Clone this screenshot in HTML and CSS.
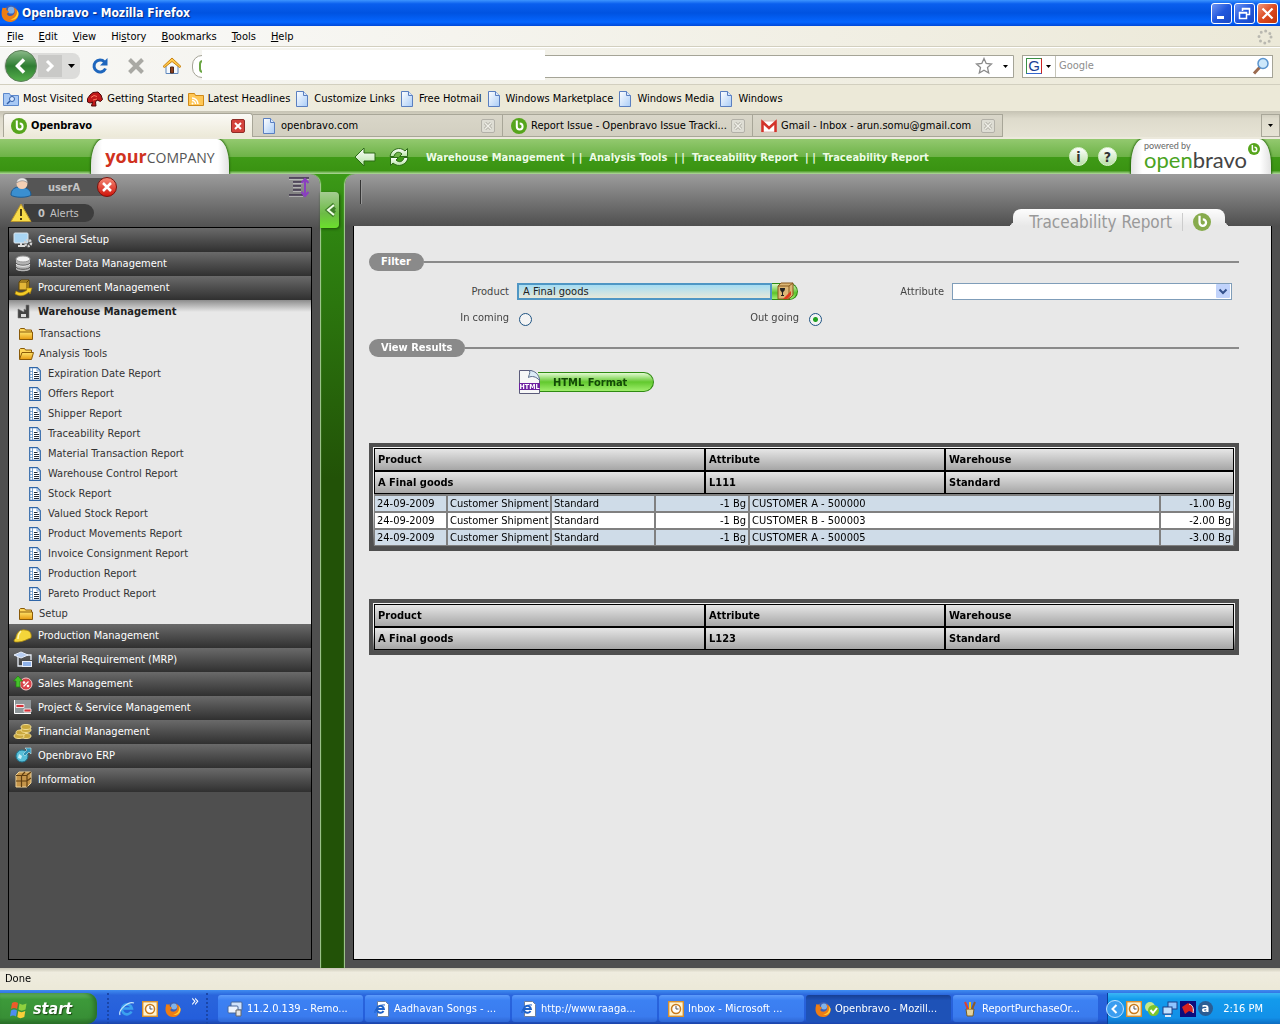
FILE: index.html
```
<!DOCTYPE html>
<html lang="en">
  <head>
    <meta charset="UTF-8">
    <title>Openbravo</title>
    <link rel="stylesheet" href="styles.css">
  </head>
  <body>
    <!-- shared icons -->
    <svg class="sprite" width="0" height="0">
      <defs>
        <linearGradient id="g-page" x1="0" y1="0" x2="1" y2="1"><stop offset="0" stop-color="#fff"/><stop offset="1" stop-color="#a9ccf7"/></linearGradient>
        <linearGradient id="g-gold" x1="0" y1="0" x2="0" y2="1"><stop offset="0" stop-color="#ffe46a"/><stop offset="1" stop-color="#e59a10"/></linearGradient>
        <linearGradient id="g-back" x1="0" y1="0" x2="0" y2="1"><stop offset="0" stop-color="#8dbb8b"/><stop offset=".5" stop-color="#2e7d32"/><stop offset="1" stop-color="#55b04b"/></linearGradient>
        <linearGradient id="g-round" x1="0" y1="0" x2="0" y2="1"><stop offset="0" stop-color="#fff"/><stop offset="1" stop-color="#b5e3a4"/></linearGradient>
        <linearGradient id="g-red" x1="0" y1="0" x2="0" y2="1"><stop offset="0" stop-color="#f58a78"/><stop offset="1" stop-color="#d01208"/></linearGradient>
      </defs>
      <symbol id="page" viewBox="0 0 16 16">
        <path d="M2.500 .5h7l4 4v11h-11z" fill="url(#g-page)" stroke="#5a7fc0"/>
        <path d="M9.500 .5v4h4" fill="#dbe9fb" stroke="#5a7fc0"/>
      </symbol>
      <symbol id="ob" viewBox="0 0 16 16">
        <circle cx="8" cy="8" r="8" fill="#56a51c"/>
        <path d="M5.800 2.500v6a2.900 2.900 0 1 0 2.900-2.900" fill="none" stroke="#fff" stroke-width="2"/>
      </symbol>
      <symbol id="fox" viewBox="0 0 16 16">
        <circle cx="8.500" cy="7.500" r="6.500" fill="#3c5fb5"/>
        <circle cx="9" cy="5.500" r="3" fill="#7fb2ea"/>
        <path d="M1.500 3c1 .8 2 .6 3.500.6C4 5 5 6 7 6.500c-.5 1.500-2 1.500-1.500 3C7 11.500 11 11 12 8c.8-2-.2-4-1-5 3 1 5 4 4.500 7-.8 4-4 6-7.500 6C3.500 16 .5 12.500.5 8.500.5 6 1 4.500 1.500 3z" fill="#ef7d13"/>
        <path d="M14 5c1 4-1 8-6 8.500 4 1.500 8-1.500 7.500-6z" fill="#ffd33a"/>
      </symbol>
      <symbol id="folder" viewBox="0 0 16 14">
        <path d="M1.500 11.500v-9l1-1h4l1 1.500h6v2" fill="#ffd75a" stroke="#8a5a08"/>
        <path d="M1.500 12.500v-7.500h13v7.500z" fill="url(#g-gold)" stroke="#8a5a08"/>
      </symbol>
      <symbol id="folder-open" viewBox="0 0 16 14">
        <path d="M1.500 12V2.500l1-1h4l1 1.500h6v2" fill="#ffd75a" stroke="#8a5a08"/>
        <path d="M1.500 12.500L4 5.500h11.500l-2 7z" fill="url(#g-gold)" stroke="#8a5a08"/>
      </symbol>
      <symbol id="report" viewBox="0 0 12 14">
        <path d="M.7 .7h7.600l3 3v9.600H.7z" fill="#fff" stroke="#2f66a8" stroke-width="1.200"/>
        <path d="M8 1v3h3M.7 4.500h3M.7 7.500h3M.7 10.500h3M3.500 1v12" fill="none" stroke="#5c8fc7" stroke-width=".8"/>
        <path d="M5 5.500h3.500M5 7.500h5M5 9.500h5M5 11.500h5" stroke="#1f2c3c"/>
      </symbol>
      <symbol id="tabx" viewBox="0 0 14 14">
        <rect x=".5" y=".5" width="13" height="13" rx="1.500" fill="#deddd4" stroke="#b3b1a8"/>
        <path d="M4 4l6 6M10 4l-6 6" stroke="#aaa89f" stroke-width="3"/>
        <path d="M4 4l6 6M10 4l-6 6" stroke="#f0efe8" stroke-width="1.500"/>
      </symbol>
      <symbol id="ie" viewBox="0 0 16 16">
        <path d="M12.500 10.500a5 5 0 1 1 .4-3H4" fill="none" stroke="#3ba1ee" stroke-width="2.600"/>
        <path d="M1 14C-1 9 9 0 15 2" fill="none" stroke="#c5e5fa" stroke-width="1.200"/>
      </symbol>
      <symbol id="iepage" viewBox="0 0 16 16">
        <path d="M3.500 .5h8l3 3v12h-11z" fill="#fff" stroke="#6b7f9f"/>
        <path d="M9.500 10a3.500 3.500 0 1 1 .4-2H4" fill="none" stroke="#1f62c9" stroke-width="2"/>
        <path d="M1 12C0 8 6 3 11 4" fill="none" stroke="#1f62c9"/>
      </symbol>
      <symbol id="clock" viewBox="0 0 16 16">
        <rect x=".7" y=".7" width="14.600" height="14.600" fill="#fff3cf" stroke="#d7902e" stroke-width="1.400"/>
        <circle cx="8" cy="8" r="4.500" fill="#fff" stroke="#c97b1c" stroke-width="1.500"/>
        <path d="M8 5v3h2.500" fill="none" stroke="#555"/>
      </symbol>
    </svg>

    <header class="titlebar">
      <svg width="18" height="18"><use href="#fox"/></svg>
      <h1>Openbravo - Mozilla Firefox</h1>
      <div class="window-buttons">
        <button aria-label="Minimize"><svg width="19" height="19"><path d="M5 13.500h7" stroke="#fff" stroke-width="3"/></svg></button>
        <button aria-label="Restore"><svg width="19" height="19"><path d="M7.500 7V4.500h7v6H12M4.500 8.500h7v6h-7zM7 5h8M4 9h8" fill="none" stroke="#fff" stroke-width="1.500"/></svg></button>
        <button class="close" aria-label="Close"><svg width="19" height="19"><path d="M4.500 4.500l10 10M14.500 4.500l-10 10" stroke="#fff" stroke-width="2.200"/></svg></button>
      </div>
    </header>

    <nav class="menubar">
      <a href="#"><u>F</u>ile</a>
      <a href="#"><u>E</u>dit</a>
      <a href="#"><u>V</u>iew</a>
      <a href="#">Hi<u>s</u>tory</a>
      <a href="#"><u>B</u>ookmarks</a>
      <a href="#"><u>T</u>ools</a>
      <a href="#"><u>H</u>elp</a>
      <svg class="throbber" width="16" height="16"><circle cx="8" cy="8" r="6" fill="none" stroke="#b9b8b0" stroke-width="3" stroke-linecap="round" stroke-dasharray="0 4.710"/></svg>
    </nav>

    <div class="navbar">
      <div class="history">
        <button class="back" aria-label="Back"><svg width="34" height="34"><circle cx="17" cy="17" r="15.500" fill="url(#g-back)" stroke="#5d7f5a"/><path d="M20 10.500L13.500 17l6.500 6.500" fill="none" stroke="#fff" stroke-width="3.500"/></svg></button>
        <button class="forward" aria-label="Forward"><svg width="24" height="22"><path d="M9 6l5 5-5 5" fill="none" stroke="#fff" stroke-width="3"/></svg></button>
        <button class="recent" aria-label="Recent pages"><svg width="7" height="4"><path d="M0 0h7L3.500 4z"/></svg></button>
      </div>
      <button class="tool" aria-label="Reload"><svg width="18" height="18"><path d="M14.500 11.500A6 6 0 1 1 13.500 5" fill="none" stroke="#1e66bd" stroke-width="3"/><path d="M16.500 1v7.500H9z" fill="#1e66bd"/></svg></button>
      <button class="tool" aria-label="Stop"><svg width="18" height="18"><path d="M2.500 2.500l13 13M15.500 2.500l-13 13" stroke="#a9a9a4" stroke-width="4"/></svg></button>
      <button class="tool" aria-label="Home"><svg width="20" height="18"><path d="M4 9v7.500h12V9l-6-6z" fill="#f4f8fd" stroke="#5d87bd"/><path d="M1 9.500L10 1l9 8.500-1.500 1L10 4.500l-7.500 6z" fill="#ffc94a" stroke="#c98212"/><path d="M8.500 10h3v6h-3z" fill="#8c3d1c" stroke="#4d2a1a"/></svg></button>
      <div class="urlbar">
        <input type="text" aria-label="Location">
        <span class="site"></span>
        <span class="blank"></span>
        <svg width="18" height="18"><path d="M9 1.500l2.200 5 5.300.5-4 3.600 1.200 5.400L9 13.200 4.300 16l1.200-5.400-4-3.600 5.300-.5z" fill="#fff" stroke="#8b8b8b" stroke-width="1.300"/></svg>
        <svg class="drop" width="5" height="3"><path d="M0 0h5L2.500 3z"/></svg>
      </div>
      <div class="search">
        <span class="engine">G</span>
        <svg class="drop" width="5" height="3"><path d="M0 0h5L2.500 3z"/></svg>
        <input type="text" placeholder="Google" aria-label="Search">
        <svg width="18" height="18"><path d="M8 10l-6 6.500" stroke="#9b6a4f" stroke-width="3"/><circle cx="11" cy="6.500" r="5" fill="#cde8fb" stroke="#5a94cf" stroke-width="1.500"/></svg>
      </div>
    </div>

    <nav class="bookmarks">
      <a href="#"><svg width="16" height="16"><path d="M.5 2.500h6l1 2h8v10H.5z" fill="#a8c9f5" stroke="#5b87cb"/><circle cx="9" cy="8" r="2.500" fill="#dcebff" stroke="#315ea8"/><path d="M7 10l-3 3" stroke="#315ea8" stroke-width="1.500"/></svg>Most Visited</a>
      <a href="#"><svg width="16" height="16"><path d="M.5 7.500L3 4l3-2.500 5-.5 3 3 1.500 4.500-2 2-3.500-1.500-1.500 2 .5 4H4.500l1-4-2.500 1-2.500-1z" fill="#c01a1a" stroke="#4d0808"/><path d="M4 6.500l3-2 3 1M6 9l4-1" fill="none" stroke="#ff7a5d"/></svg>Getting Started</a>
      <a href="#"><svg width="16" height="16"><path d="M.5 2.500h6l1 2h8v10H.5z" fill="#ffc755" stroke="#cf8a18"/><path d="M4 7a6 6 0 0 1 6 6M4 9.500A3.500 3.500 0 0 1 7.500 13" fill="none" stroke="#fff" stroke-width="1.500"/><circle cx="4.500" cy="12.500" r="1" fill="#fff"/></svg>Latest Headlines</a>
      <a href="#"><svg width="16" height="16"><use href="#page"/></svg>Customize Links</a>
      <a href="#"><svg width="16" height="16"><use href="#page"/></svg>Free Hotmail</a>
      <a href="#"><svg width="16" height="16"><use href="#page"/></svg>Windows Marketplace</a>
      <a href="#"><svg width="16" height="16"><use href="#page"/></svg>Windows Media</a>
      <a href="#"><svg width="16" height="16"><use href="#page"/></svg>Windows</a>
    </nav>

    <div class="tabs">
      <div class="tab active">
        <svg width="16" height="16"><use href="#ob"/></svg>
        <a href="#">Openbravo</a>
        <button aria-label="Close tab"><svg width="14" height="14"><rect x=".5" y=".5" width="13" height="13" rx="1.500" fill="#d4423b" stroke="#8f2d28"/><path d="M4 4l6 6M10 4l-6 6" stroke="#fff" stroke-width="2"/></svg></button>
      </div>
      <div class="tab">
        <svg width="16" height="16"><use href="#page"/></svg>
        <a href="#">openbravo.com</a>
        <button aria-label="Close tab"><svg width="14" height="14"><use href="#tabx"/></svg></button>
      </div>
      <div class="tab">
        <svg width="16" height="16"><use href="#ob"/></svg>
        <a href="#">Report Issue - Openbravo Issue Tracki...</a>
        <button aria-label="Close tab"><svg width="14" height="14"><use href="#tabx"/></svg></button>
      </div>
      <div class="tab">
        <svg width="16" height="16"><path d="M.5 3h15v11H.5z" fill="#fff" stroke="#e0b5b0"/><path d="M1.500 14V4L8 10l6.500-6v10" fill="none" stroke="#d3332a" stroke-width="2.500"/></svg>
        <a href="#">Gmail - Inbox - arun.somu@gmail.com</a>
        <button aria-label="Close tab"><svg width="14" height="14"><use href="#tabx"/></svg></button>
      </div>
      <button class="all-tabs" aria-label="List all tabs"><svg width="5" height="3"><path d="M0 0h5L2.500 3z"/></svg></button>
    </div>

    <div class="app">
      <header class="topbar">
        <div class="company"><b>your</b>COMPANY</div>
        <button class="go-back" aria-label="Go back"><svg width="22" height="22"><path d="M1 11l9-9v5h11v8H10v5z" fill="url(#g-round)" stroke="#2c6b17"/></svg></button>
        <button class="refresh" aria-label="Refresh"><svg width="20" height="20"><path d="M1 9.500C2 2 11-1 16 4l2.500-2.500v8h-8L13 7c-3-3-7-2-8 2.500z" fill="url(#g-round)" stroke="#2c6b17"/><path d="M19 10.500c-1 7.500-10 10.500-15 5.500l-2.500 2.500v-8h8L7 13c3 3 7 2 8-2.500z" fill="url(#g-round)" stroke="#2c6b17"/></svg></button>
        <nav class="breadcrumb">
          <a href="#">Warehouse Management</a><span>| |</span><a href="#">Analysis Tools</a><span>| |</span><a href="#">Traceability Report</a><span class="wide">| |</span><a href="#">Traceability Report</a>
        </nav>
        <button class="round" aria-label="About">i</button>
        <button class="round" aria-label="Help">?</button>
        <div class="powered">
          <small>powered by</small>
          <strong><em>open</em>bravo</strong>
          <svg width="12" height="12" viewBox="0 0 16 16"><use href="#ob"/></svg>
        </div>
      </header>

      <aside class="sidebar">
        <div class="session">
          <div class="user">
            <svg width="22" height="21"><path d="M1 18c0-6 4-8 9-8s11 2 11 8c-3 3-17 3-20 0z" fill="#3a8fd0" stroke="#1d5c93"/><circle cx="12" cy="6.500" r="5.500" fill="#f3cfb4"/><path d="M6.500 6c0-7 11-7 11 0-3-3-7-3-11 0z" fill="#e9e9e9" stroke="#777" stroke-width=".6"/></svg>
            <a href="#">userA</a>
            <button aria-label="Log out"><svg width="22" height="22"><circle cx="11" cy="11" r="9.500" fill="url(#g-red)" stroke="#7a120c"/><path d="M7 7l8 8M15 7l-8 8" stroke="#fff" stroke-width="2.500"/></svg></button>
          </div>
          <button class="expand" aria-label="Expand menu"><svg width="22" height="22"><path d="M1 3h20M5 7h10M5 11h8M5 15h8M1 20h14" stroke="#ddd" stroke-width="1"/><path d="M1 2h20M5 6h9M5 10h8M5 14h8M1 19h14" stroke="#3b3048" stroke-width="1.500"/><path d="M17 3v16M13.500 7L17 3l3.500 4M13.500 16l3.500 4 3.500-4" fill="none" stroke="#8a3fc0" stroke-width="2"/></svg></button>
          <div class="alerts">
            <svg width="22" height="20"><path d="M11 1l10 17.500H1z" fill="#f8dc4a" stroke="#b9952c" stroke-linejoin="round"/><path d="M11 6v7M11 15v2" stroke="#4a3b10" stroke-width="2"/></svg>
            <a href="#"><b>0</b> Alerts</a>
          </div>
        </div>
        <ul class="menu">
          <li><a class="group" href="#"><svg width="20" height="18"><rect x="1" y="2" width="14" height="10" rx="1" fill="#a9d5f3" stroke="#dce6ee"/><path d="M5 15h7M8 12v3" stroke="#ddd" stroke-width="2"/><circle cx="15" cy="12" r="3" fill="none" stroke="#d5d5d5" stroke-width="2.500" stroke-dasharray="2 1"/></svg>General Setup</a></li>
          <li><a class="group" href="#"><svg width="20" height="18"><path d="M3 4v10c0 3 14 3 14 0V4z" fill="#b5b5b5"/><ellipse cx="10" cy="4" rx="7" ry="3" fill="#f2f2f2" stroke="#999"/><path d="M3 8c1 3 13 3 14 0M3 12c1 3 13 3 14 0" fill="none" stroke="#555"/><path d="M3 9c1 3 13 3 14 0" fill="none" stroke="#eee"/></svg>Master Data Management</a></li>
          <li><a class="group" href="#"><svg width="20" height="18"><path d="M6 3l2-2h8v8l-2 2H6z" fill="#e2b637" stroke="#604507"/><path d="M6 3h8v8M14 3l2-2" fill="none" stroke="#604507"/><path d="M3 12c5 3 8 1 11-1l-1-2h6l-2 6-1-2c-4 4-9 5-14 2z" fill="#f3cc27" stroke="#a67c07" stroke-width=".6"/></svg>Procurement Management</a></li>
          <li class="open">
            <a class="group" href="#"><svg width="20" height="18"><path d="M5 15V6l6 3V6l2 1V2h3v13z" fill="#444" stroke="#777" stroke-width=".6"/><path d="M8 11h5v3H8z" fill="#ddd"/></svg>Warehouse Management</a>
            <ul>
              <li><a class="folder" href="#"><svg width="16" height="14"><use href="#folder"/></svg>Transactions</a></li>
              <li><a class="folder" href="#"><svg width="16" height="14"><use href="#folder-open"/></svg>Analysis Tools</a>
                <ul>
                  <li><a class="report" href="#"><svg width="12" height="14"><use href="#report"/></svg>Expiration Date Report</a></li>
                  <li><a class="report" href="#"><svg width="12" height="14"><use href="#report"/></svg>Offers Report</a></li>
                  <li><a class="report" href="#"><svg width="12" height="14"><use href="#report"/></svg>Shipper Report</a></li>
                  <li><a class="report" href="#"><svg width="12" height="14"><use href="#report"/></svg>Traceability Report</a></li>
                  <li><a class="report" href="#"><svg width="12" height="14"><use href="#report"/></svg>Material Transaction Report</a></li>
                  <li><a class="report" href="#"><svg width="12" height="14"><use href="#report"/></svg>Warehouse Control Report</a></li>
                  <li><a class="report" href="#"><svg width="12" height="14"><use href="#report"/></svg>Stock Report</a></li>
                  <li><a class="report" href="#"><svg width="12" height="14"><use href="#report"/></svg>Valued Stock Report</a></li>
                  <li><a class="report" href="#"><svg width="12" height="14"><use href="#report"/></svg>Product Movements Report</a></li>
                  <li><a class="report" href="#"><svg width="12" height="14"><use href="#report"/></svg>Invoice Consignment Report</a></li>
                  <li><a class="report" href="#"><svg width="12" height="14"><use href="#report"/></svg>Production Report</a></li>
                  <li><a class="report" href="#"><svg width="12" height="14"><use href="#report"/></svg>Pareto Product Report</a></li>
                </ul>
              </li>
              <li><a class="folder" href="#"><svg width="16" height="14"><use href="#folder"/></svg>Setup</a></li>
            </ul>
          </li>
          <li><a class="group" href="#"><svg width="20" height="18"><path d="M1 14c0-2 2-2 2-4C4 5 8 2 12 3c5 0 7 4 6 8-4 1-8 4-13 4-2 0-4 0-4-1z" fill="#f4d53a" stroke="#a9860f" stroke-width=".8"/><path d="M8 4c-2 2-3 4-3 8" fill="none" stroke="#fff7b0" stroke-width="1.500"/></svg>Production Management</a></li>
          <li><a class="group" href="#"><svg width="20" height="18"><path d="M8 1l7 3-7 3-7-3z" fill="#b7cdf0" stroke="#e8eef8"/><path d="M5 6v9h4M14 4h4v5" fill="none" stroke="#e8eef8" stroke-width="1.300"/><rect x="9.500" y="10.500" width="9" height="5" fill="#8fb2ea" stroke="#e8eef8"/></svg>Material Requirement (MRP)</a></li>
          <li><a class="group" href="#"><svg width="20" height="18"><circle cx="13" cy="9" r="6" fill="#d9434a" stroke="#f7c9c9"/><path d="M10.500 11.500l5-5" stroke="#fff" stroke-width="1.300"/><circle cx="11" cy="7.500" r="1.300" fill="#fff"/><circle cx="15" cy="11" r="1.300" fill="#fff"/><path d="M5 1l4.500 5H7v6H3V6H.5z" fill="#45c22b" stroke="#1f7d10" stroke-width=".7"/></svg>Sales Management</a></li>
          <li><a class="group" href="#"><svg width="20" height="18"><path d="M1 1h17v14H1z" fill="#8f9699"/><path d="M1.500 1v13.500H18" fill="none" stroke="#fff"/><path d="M3 5.500h8v3H3zM11 10h7v3h-7z" fill="#d6333a" stroke="#fff" stroke-width=".8"/></svg>Project &amp; Service Management</a></li>
          <li><a class="group" href="#"><svg width="20" height="18" fill="#c9a83e" stroke="#f1dc8f"><ellipse cx="13" cy="13" rx="5" ry="2.500"/><ellipse cx="6" cy="13" rx="5" ry="2.500"/><ellipse cx="8" cy="9.500" rx="5" ry="2.500"/><ellipse cx="13" cy="7" rx="5" ry="2.500"/><ellipse cx="13" cy="4" rx="5" ry="2.500"/></svg>Financial Management</a></li>
          <li><a class="group" href="#"><svg width="20" height="18"><circle cx="9" cy="9" r="6" fill="#58bfd8" stroke="#1f7590"/><path d="M6 7l3 2-1 3-3-1z" fill="#c9f0f8"/><path d="M10 7l4-4-2-2h6v6l-2-2-4 4z" fill="#2f92b5" stroke="#c4e9f2" stroke-width=".6"/></svg>Openbravo ERP</a></li>
          <li><a class="group" href="#"><svg width="20" height="18"><path d="M3 4l3-3h12v11l-4 4H3z" fill="#c5954a" stroke="#eed39a"/><path d="M3 4.500h11V16M14 4l4-3M8.500 4v12M3 10h11l4-3M9 4l3-3" fill="none" stroke="#5f3e12" stroke-width="1.200"/></svg>Information</a></li>
        </ul>
      </aside>

      <div class="divider">
        <button aria-label="Hide menu"><svg width="12" height="16"><path d="M10 2L3 8l7 6M11 5.500L8 8l3 2.500" fill="none" stroke="#3f7d2a" stroke-width="3"/><path d="M10 3L4 8l6 5" fill="none" stroke="#f2ffe9" stroke-width="2"/></svg></button>
      </div>

      <main class="workspace">
        <div class="toolbar">
          <span class="separator"></span>
          <h2>Traceability Report <svg width="18" height="18" viewBox="0 0 16 16"><circle cx="8" cy="8" r="8" fill="#87ab4d"/><path d="M5.800 2.500v6a2.900 2.900 0 1 0 2.900-2.900" fill="none" stroke="#fff" stroke-width="2"/></svg></h2>
        </div>
        <form class="content">
          <h3><span>Filter</span></h3>
          <div class="fields">
            <label for="product">Product</label>
            <div class="lookup">
              <input id="product" type="text" value="A Final goods" autofocus>
              <button type="button" aria-label="Select product"><svg width="18" height="19"><path d="M2 4l3-3h12v12l-4 4H2z" fill="#dcb776" stroke="#87591c"/><path d="M2 4h11v13M13 4l4-3" fill="none" stroke="#87591c"/><path d="M4 6h5c0 4-2 3-2 5v2h1v1H5v-1h1v-2c0-2-2-1-2-5z" fill="#222"/><path d="M7 17l8-8v4l-4 4z" fill="#df3b1f"/></svg></button>
            </div>
            <label for="attribute">Attribute</label>
            <div class="combo">
              <select id="attribute"><option></option></select>
              <svg width="14" height="14"><rect width="14" height="14" rx="1" fill="#c1d3fb"/><path d="M3.500 5.500L7 9l3.500-3.500" fill="none" stroke="#33518c" stroke-width="2"/></svg>
            </div>
            <label for="incoming">In coming</label>
            <div class="direction">
              <input id="incoming" type="radio" name="direction">
              <label for="outgoing">Out going</label>
            </div>
            <div class="direction"><input id="outgoing" type="radio" name="direction" checked></div>
          </div>
          <h3><span>View Results</span></h3>
          <div class="actions">
            <button type="button">
              <svg width="21" height="24"><path d="M.5 .5h12l8 8v15H.5z" fill="#f7f7f7" stroke="#5b5b7a"/><path d="M10.500 .5c1 3-1 5-1 7 3-2 8-1 11 3 0-6-5-10-10-10z" fill="#dcebf6" stroke="#5b6b8a"/><path d="M0 13h21v7H0z" fill="#6c1fa0"/><text x="10.500" y="19" text-anchor="middle">HTML</text></svg>
              <span>HTML Format</span>
            </button>
          </div>

          <div class="results">
            <table>
              <colgroup><col class="c-date"><col class="c-type"><col class="c-type"><col class="c-a"><col class="c-b"><col class="c-c"><col><col class="c-total"></colgroup>
              <thead>
                <tr><th colspan="4">Product</th><th colspan="2">Attribute</th><th colspan="2">Warehouse</th></tr>
                <tr><th colspan="4">A Final goods</th><th colspan="2">L111</th><th colspan="2">Standard</th></tr>
              </thead>
              <tbody>
                <tr><td>24-09-2009</td><td>Customer Shipment</td><td>Standard</td><td class="num" colspan="2">-1 Bg</td><td colspan="2">CUSTOMER A - 500000</td><td class="num">-1.00 Bg</td></tr>
                <tr><td>24-09-2009</td><td>Customer Shipment</td><td>Standard</td><td class="num" colspan="2">-1 Bg</td><td colspan="2">CUSTOMER B - 500003</td><td class="num">-2.00 Bg</td></tr>
                <tr><td>24-09-2009</td><td>Customer Shipment</td><td>Standard</td><td class="num" colspan="2">-1 Bg</td><td colspan="2">CUSTOMER A - 500005</td><td class="num">-3.00 Bg</td></tr>
              </tbody>
            </table>
          </div>
          <div class="results">
            <table>
              <colgroup><col class="c-date"><col class="c-type"><col class="c-type"><col class="c-a"><col class="c-b"><col class="c-c"><col><col class="c-total"></colgroup>
              <thead>
                <tr><th colspan="4">Product</th><th colspan="2">Attribute</th><th colspan="2">Warehouse</th></tr>
                <tr><th colspan="4">A Final goods</th><th colspan="2">L123</th><th colspan="2">Standard</th></tr>
              </thead>
            </table>
          </div>
        </form>
      </main>
    </div>

    <div class="statusbar">Done</div>

    <footer class="taskbar">
      <button class="start"><svg width="20" height="20"><path d="M3 4c2-1.500 4-1.500 6 0L8 10C6 8.500 4 8.500 2 10z" fill="#ee5b2b"/><path d="M10.500 4.500c2 1.500 4 1.500 7 0l-1 6c-3 1.500-5 1.500-7 0z" fill="#8fd13f"/><path d="M2 11.500c2-1.500 4-1.500 6 0l-1 6c-2-1.500-4-1.500-6 0z" fill="#4d8df0"/><path d="M9.300 12c2 1.500 4 1.500 7 0l-1 6c-3 1.500-5 1.500-7 0z" fill="#f8cf3a"/></svg>start</button>
      <div class="quick">
        <button aria-label="Internet Explorer"><svg width="16" height="16"><use href="#ie"/></svg></button>
        <button aria-label="Outlook"><svg width="16" height="16"><use href="#clock"/></svg></button>
        <button aria-label="Firefox"><svg width="16" height="16"><use href="#fox"/></svg></button>
        <button class="more" aria-label="More">»</button>
      </div>
      <div class="tasks">
        <button><svg width="16" height="16"><rect x="4" y="1" width="11" height="8" rx="1" fill="#cfe2fb" stroke="#47679a"/><rect x="1" y="5" width="10" height="7" rx="1" fill="#eef5ff" stroke="#47679a"/><path d="M9 9h5v6H9z" fill="#e3e3e3" stroke="#666"/></svg><span>11.2.0.139 - Remo...</span></button>
        <button><svg width="16" height="16"><use href="#iepage"/></svg><span>Aadhavan Songs - ...</span></button>
        <button><svg width="16" height="16"><use href="#iepage"/></svg><span>http://www.raaga...</span></button>
        <button><svg width="16" height="16"><use href="#clock"/></svg><span>Inbox - Microsoft ...</span></button>
        <button class="current"><svg width="16" height="16"><use href="#fox"/></svg><span>Openbravo - Mozill...</span></button>
        <button><svg width="16" height="16"><path d="M4 8h8l-1 7H5z" fill="#e3d3a0" stroke="#775e22"/><path d="M6 8L3 1" stroke="#e0402b" stroke-width="2"/><path d="M8 8V1" stroke="#f0c419" stroke-width="2"/><path d="M10 8l3-7" stroke="#8c5a2a" stroke-width="2"/></svg><span>ReportPurchaseOr...</span></button>
      </div>
      <div class="tray">
        <button aria-label="Show hidden icons"><svg width="18" height="18"><circle cx="9" cy="9" r="8.500" fill="#3a9df0" stroke="#bfe2ff"/><path d="M10.500 5L6.500 9l4 4" fill="none" stroke="#fff" stroke-width="2"/></svg></button>
        <svg width="16" height="16"><use href="#clock"/></svg>
        <svg width="16" height="16"><circle cx="6" cy="6" r="5" fill="#c5e88a"/><circle cx="9.500" cy="9.500" r="5.500" fill="#7cc52c"/><path d="M6.500 9l2.500 3 4-5" fill="none" stroke="#fff" stroke-width="2"/></svg>
        <svg width="16" height="16"><rect x="6" y="1" width="9" height="7" fill="#8fc4ff" stroke="#1f3f86"/><rect x="1" y="6" width="9" height="7" fill="#bfe0ff" stroke="#1f3f86"/><path d="M3 15h6" stroke="#dde8f7" stroke-width="2"/></svg>
        <svg width="16" height="16"><rect width="16" height="16" fill="#0c0c7c"/><path d="M2 6l6-4 4 3 2 7-5-2-4 3z" fill="#d8221f"/><path d="M9 3c4 1 5 5 4 9" fill="none" stroke="#fff"/></svg>
        <span class="avast">a</span>
        <time>2:16 PM</time>
      </div>
    </footer>
  </body>
</html>
```
FILE: styles.css
```
* {
  box-sizing: border-box;
}

body {
  margin: 0;
  min-height: 100vh;
  display: flex;
  flex-direction: column;
  font-family: "DejaVu Sans Condensed", Tahoma, sans-serif;
  font-size: 11px;
  line-height: 16px;
  color: #000;
  background: #ece9d8;
}

a {
  color: inherit;
  text-decoration: none;
}

button,
input,
select {
  font: inherit;
  color: inherit;
}

button {
  display: flex;
  align-items: center;
  justify-content: center;
  padding: 0;
  border: 0;
  background: none;
}

svg {
  flex: none;
}

ul {
  margin: 0;
  padding: 0;
  list-style: none;
}

.sprite {
  position: absolute;
}

/* browser window */

.titlebar {
  display: flex;
  align-items: center;
  gap: 3px;
  height: 26px;
  padding: 0 2px 0 1px;
  color: #fff;
  background: linear-gradient(#3d95ff 0, #0a5fee 15%, #0053e1 50%, #0566ff 85%, #0048d8);
}

.titlebar h1 {
  flex: 1;
  margin: 0;
  font-size: 12px;
  text-shadow: 1px 1px 1px #0a2a80;
}

.window-buttons {
  display: flex;
  gap: 2px;
}

.window-buttons button {
  width: 21px;
  height: 21px;
  border: 1px solid #fff;
  border-radius: 3px;
  background: linear-gradient(135deg, #6f95f3, #2157dd 50%, #1a49c4);
}

.window-buttons .close {
  background: linear-gradient(135deg, #f0977c, #dc4a20 50%, #c03408);
}

.menubar {
  display: flex;
  align-items: center;
  gap: 15px;
  height: 21px;
  padding: 1px 7px 0;
  background: linear-gradient(90deg, #fafafa, #ece9d8);
  border-bottom: 1px solid #d2cfbf;
}

.throbber {
  margin-left: auto;
}

.navbar {
  display: flex;
  align-items: center;
  height: 38px;
  padding: 0 7px 0 4px;
  background: linear-gradient(90deg, #f7f7f5, #ece9d8);
  border-top: 1px solid #fff;
  border-bottom: 1px solid #d2cfbf;
}

.history {
  display: flex;
  align-items: center;
  width: 76px;
  height: 26px;
  margin-right: 10px;
  border-radius: 14px 8px 8px 14px;
  background: #dcdcda;
}

.history .forward {
  width: 24px;
  height: 22px;
  background: #c9c9c7;
}

.history .recent {
  flex: 1;
}

.tool {
  width: 36px;
}

.tool:nth-of-type(1) {
  width: 20px;
  margin-right: 8px;
}

.urlbar {
  position: relative;
  display: flex;
  align-items: center;
  flex: 1;
  gap: 10px;
  height: 23px;
  margin: 0 8px 0 2px;
  padding-right: 5px;
  border: 1px solid #a5a497;
  border-radius: 10px 0 0 10px;
  background: #fff;
}

.urlbar input,
.search input {
  flex: 1;
  min-width: 0;
  border: 0;
  padding: 0;
  outline: 0;
  background: none;
}

.site {
  position: absolute;
  left: 6px;
  width: 8px;
  height: 13px;
  border: 2px solid #6aa544;
  border-radius: 8px;
}

.blank {
  position: absolute;
  left: 9px;
  top: -6px;
  width: 343px;
  height: 30px;
  background: #fff;
}

.search {
  display: flex;
  align-items: center;
  gap: 4px;
  width: 251px;
  height: 23px;
  padding: 0 2px 0 3px;
  border: 1px solid #a5a497;
  background: #fff;
}

.engine {
  width: 16px;
  height: 16px;
  border: 1px solid #3a8f45;
  border-right-color: #c22;
  border-bottom-color: #36c;
  font-family: "Liberation Sans", sans-serif;
  font-size: 15px;
  line-height: 14px;
  text-align: center;
  color: #1c3f94;
}

.search input {
  padding-left: 3px;
  align-self: stretch;
  border-left: 1px solid #c5c4b8;
}

.search input::placeholder {
  color: #8d8d8d;
}

.bookmarks {
  display: flex;
  align-items: center;
  gap: 4px;
  height: 26px;
  padding: 1px 3px 0;
  background: linear-gradient(90deg, #f6f5f0, #ece9d8 30%);
}

.bookmarks a {
  display: flex;
  align-items: center;
  gap: 4px;
  white-space: nowrap;
}

.tabs {
  display: flex;
  align-items: flex-end;
  height: 28px;
  padding-left: 3px;
  background: linear-gradient(#c6c3b4, #dedbcc 30%, #e6e3d5);
  border-bottom: 2px solid #ece9dc;
}

.tab {
  display: flex;
  align-items: center;
  gap: 4px;
  flex: 0 1 250px;
  min-width: 0;
  height: 23px;
  padding: 0 7px 0 8px;
  border: 1px solid #a8a698;
  border-width: 1px 1px 1px 0;
  background: linear-gradient(#d9d6c9, #d2cfc0);
}

.tab a {
  flex: 1;
  overflow: hidden;
  white-space: nowrap;
}

.tab.active {
  height: 24px;
  padding-left: 7px;
  border-width: 1px 1px 0;
  border-radius: 3px 3px 0 0;
  font-weight: bold;
  background: linear-gradient(#fbfaf6, #ece9d8);
}

.all-tabs {
  width: 19px;
  height: 23px;
  margin-left: auto;
  border: 1px solid #a8a698;
}

/* application */

.app {
  flex: 1;
  display: grid;
  grid-template-columns: 320px 25px 1fr;
  grid-template-rows: 35px 1fr;
  background: linear-gradient(#3c9a17 35px, #2f8511 90px, #225207 340px);
}

.topbar {
  grid-column: 1 / -1;
  display: flex;
  align-items: center;
  padding: 0 9px 0 91px;
  background: linear-gradient(#93c96f, #6eb348 50%, #3f9a17 51%, #3a9312 90%, #b5dba0);
}

.company {
  align-self: stretch;
  width: 138px;
  margin-right: 125px;
  border-radius: 12px 12px 0 0 / 26px 26px 0 0;
  box-shadow: 0 0 2px 1px #2b6b12;
  clip-path: inset(0 -3px);
  font-family: "Open Sans", sans-serif;
  font-size: 14px;
  line-height: 35px;
  text-align: center;
  color: #555;
  background: linear-gradient(90deg, #e2e2e2, #fff 8%, #fff 92%, #e2e2e2);
}

.company b {
  font-size: 18px;
  color: #d0321e;
}

.refresh {
  margin: 0 17px 0 13px;
}

.breadcrumb {
  display: flex;
  flex: 1;
  gap: 7px;
  padding-top: 2px;
  font-weight: bold;
  white-space: nowrap;
  color: #eefbe6;
}

.round {
  width: 19px;
  height: 19px;
  margin-right: 10px;
  border: 1px solid #dff3d3;
  border-radius: 50%;
  font-size: 14px;
  font-weight: bold;
  color: #333;
  background: linear-gradient(#fff, #b9dfa8);
}

.powered {
  position: relative;
  align-self: stretch;
  width: 140px;
  margin-left: 4px;
  padding: 2px 0 0 13px;
  border-radius: 12px 12px 0 0 / 26px 26px 0 0;
  box-shadow: 0 0 2px 1px #2b6b12;
  clip-path: inset(0 -3px);
  background: linear-gradient(90deg, #e2e2e2, #fff 8%, #fff 92%, #e2e2e2);
}

.powered small,
.powered strong {
  display: block;
  font-family: Lato, sans-serif;
  font-size: 9px;
  line-height: 10px;
  color: #666;
}

.powered strong {
  font-size: 22px;
  font-weight: normal;
  line-height: 18px;
  color: #444;
}

.powered em {
  font-style: normal;
  color: #4aa31e;
}

.powered svg {
  position: absolute;
  top: 4px;
  right: 11px;
}

.sidebar {
  display: flex;
  flex-direction: column;
  padding: 0 8px 8px;
  border-radius: 0 10px 0 0;
  background: linear-gradient(#9c9c9c, #4f4f4f 55px);
  box-shadow: 1px 0 1px #a9cf98;
}

.session {
  display: grid;
  grid-template-columns: 1fr 22px;
  grid-auto-rows: 26px;
  height: 53px;
  padding: 0 2px;
  font-weight: bold;
  color: #c4c4c4;
}

.user,
.alerts {
  display: flex;
  align-items: center;
}

/* icons sit on top of the dark pills */
.user svg,
.alerts svg {
  position: relative;
  z-index: 1;
}

.user a,
.alerts a {
  width: 80px;
  height: 18px;
  margin-left: -8px;
  line-height: 19px;
  text-align: center;
  background: #555;
}

.user button {
  margin-left: -8px;
}

.alerts a {
  width: 70px;
  padding-left: 14px;
  border-radius: 0 9px 9px 0;
  font-weight: normal;
  text-align: left;
  background: #3d3d3d;
}

.alerts b {
  margin-right: 2px;
}

.menu {
  flex: 1;
  border: 1px solid #000;
}

.group {
  display: flex;
  align-items: center;
  gap: 5px;
  height: 24px;
  padding-left: 4px;
  color: #fff;
  background: linear-gradient(#6a6a6a, #303030);
}

.open {
  color: #333;
  background: #e8e8e8;
}

.open .group {
  color: #222;
  font-weight: bold;
  background: linear-gradient(#8c8c8c, #e8e8e8 50%);
}

.folder,
.report {
  display: flex;
  align-items: center;
  height: 20px;
  gap: 5px;
  padding-left: 9px;
}

.report {
  gap: 7px;
  padding-left: 20px;
}

.divider {
  padding-top: 18px;
}

.divider button {
  width: 19px;
  height: 36px;
  border-radius: 0 4px 4px 0;
  background: linear-gradient(#a5cc93, #6cbb45 60%, #6be02c);
  box-shadow: 1px 1px 3px #1c4d08;
}

.workspace {
  display: flex;
  flex-direction: column;
  min-width: 0;
  padding: 0 8px 8px;
  border-radius: 10px 0 0 0;
  background: linear-gradient(#9c9c9c, #4f4f4f 52px);
  box-shadow: -1px 0 1px #a9cf98;
}

.toolbar {
  display: flex;
  align-items: flex-end;
  justify-content: space-between;
  height: 52px;
  padding: 6px 47px 0 7px;
}

.separator {
  align-self: flex-start;
  width: 2px;
  height: 24px;
  border-left: 1px solid #333;
  border-right: 1px solid #999;
}

.toolbar h2 {
  position: relative;
  display: flex;
  align-items: center;
  height: 17px;
  margin: 0;
  padding: 9px 14px 0 16px;
  border-radius: 8px 8px 0 0;
  font-size: 17px;
  font-weight: normal;
  color: #999;
  background: #f2f2f2 linear-gradient(#fdfdfd, #e8e8e8);
}

/* curved feet of the title tab */
.toolbar h2::before,
.toolbar h2::after {
  content: "";
  position: absolute;
  bottom: 0;
  left: -6px;
  width: 6px;
  height: 6px;
  border-radius: 0 0 6px 0;
  box-shadow: 3px 3px 0 #e8e8e8;
  clip-path: inset(0);
}

.toolbar h2::after {
  left: 100%;
  border-radius: 0 0 0 6px;
  box-shadow: -3px 3px 0 #e8e8e8;
}

.toolbar h2 svg {
  box-sizing: content-box;
  margin-left: 10px;
  padding-left: 10px;
  border-left: 1px solid #ccc;
}

.content {
  flex: 1;
  padding: 27px 32px 16px 15px;
  border: 1px solid #000;
  border-top: 0;
  background: #e8e8e8;
}

.content h3 {
  display: flex;
  align-items: center;
  margin: 0;
  font-size: 11px;
  line-height: 18px;
  color: #fff;
}

.content h3 span {
  padding: 0 13px 0 12px;
  border-radius: 9px;
  background: #8a8a8a;
}

.content h3::after {
  content: "";
  flex: 1;
  height: 2px;
  background: #8a8a8a;
}

.fields {
  display: grid;
  grid-template-columns: 140px 1fr 137px 280px;
  gap: 8px;
  padding: 12px 7px 12px 0;
  line-height: 18px;
  color: #444;
}

.fields > label {
  text-align: right;
}

.lookup {
  display: flex;
  height: 17px;
}

.lookup input {
  flex: 1;
  min-width: 0;
  padding: 0 4px;
  border: 2px solid #4f96c4;
  outline: 0;
  color: #222;
  background: linear-gradient(#a4dcf3, #e8e8d8);
}

.lookup button {
  width: 26px;
  margin-right: 1px;
  border: 1px solid #2f8a12;
  border-left: 0;
  border-radius: 0 9px 9px 0;
  background: linear-gradient(#d9f7c4, #5ec42c 60%, #a2ee72);
}

.combo {
  position: relative;
  height: 17px;
}

.combo select {
  display: block;
  width: 100%;
  height: 17px;
  border: 1px solid #7f9db9;
  appearance: none;
  background: #fff;
}

.combo svg {
  position: absolute;
  top: 1px;
  right: 2px;
  pointer-events: none;
}

.direction {
  display: flex;
  justify-content: space-between;
  padding-left: 2px;
}

.direction input {
  width: 13px;
  height: 13px;
  margin: 4px 0 0;
  border: 1px solid #1d5281;
  border-radius: 50%;
  appearance: none;
  background: #f4f4f4;
}

.direction input:checked {
  background: radial-gradient(#21a121 2px, #f4f4f4 3px);
}

.actions {
  padding: 13px 0 49px 150px;
}

.actions svg {
  position: relative;
}

.actions text {
  font-size: 7px;
  font-weight: bold;
  fill: #fff;
}

.actions span {
  width: 116px;
  height: 20px;
  margin-left: -2px;
  padding-left: 15px;
  border: 1px solid #2f8a12;
  border-left: 0;
  border-radius: 0 10px 10px 0;
  font-weight: bold;
  line-height: 19px;
  text-align: left;
  color: #134a06;
  background: linear-gradient(#e3fad2, #62c92e 50%, #a0ee6c);
}

.results {
  margin-bottom: 48px;
  padding: 1px;
  border: 4px solid #4f4f4f;
  background: linear-gradient(#f4f4f4 60%, #4f4f4f);
}

.results table {
  width: 100%;
  table-layout: fixed;
  border-spacing: 0;
  background: #fff;
}

.c-date { width: 73px; }
.c-type { width: 104px; }
.c-a { width: 50px; }
.c-b { width: 44px; }
.c-c { width: 196px; }
.c-total { width: 74px; }

.results th {
  height: 23px;
  padding: 1px 3px 0;
  border: 1px solid #000;
  text-align: left;
  background: linear-gradient(#e6e6e6, #a6a6a6);
}

.results td {
  height: 17px;
  padding: 0 2px;
  border: 1px solid #808080;
  line-height: 15px;
  white-space: nowrap;
}

.results tbody tr:first-child td {
  border-top-width: 2px;
}

.results tr:nth-child(odd) td {
  background: #cfdce8;
}

.results .num {
  text-align: right;
}

/* desktop */

.statusbar {
  height: 22px;
  padding: 3px 5px;
  background: linear-gradient(#c9c6b6, #efecdf 20%, #ece9d8);
}

.taskbar {
  display: flex;
  height: 34px;
  color: #fff;
  background: linear-gradient(#3f8cf0, #2a65dc 15%, #245edb 85%, #1b44a8);
}

.start {
  justify-content: flex-start;
  gap: 4px;
  width: 97px;
  margin: 3px 0 0;
  padding-left: 9px;
  border-radius: 0 10px 10px 0;
  font-size: 16px;
  font-weight: bold;
  font-style: italic;
  text-shadow: 1px 1px 1px #1b4a12;
  background: linear-gradient(#6cb86a, #3d9a3a 20%, #388f36 80%, #2a6e28);
  box-shadow: inset -3px 0 4px #2a7028;
}

.quick {
  display: flex;
  align-items: center;
  gap: 7px;
  width: 101px;
  margin: 3px 10px 0 10px;
  padding-left: 10px;
  border: 2px dotted #1a46a8;
  border-width: 0 2px;
}

.more {
  align-self: flex-start;
  margin-left: 3px;
  font-size: 15px;
}

.tasks {
  display: flex;
  flex: 1;
  gap: 2px;
  padding: 5px 8px 2px 0;
  min-width: 0;
}

.tasks button {
  flex: 0 1 145px;
  gap: 4px;
  justify-content: flex-start;
  min-width: 0;
  padding-left: 9px;
  border-radius: 3px;
  background: linear-gradient(#5d9bfa, #3c81f3 20%, #3a7bee 80%, #2f68d4);
}

.tasks .current {
  background: linear-gradient(#173f92, #1e52b7 20%, #1e52b7);
}

.tasks span {
  overflow: hidden;
  white-space: nowrap;
}

.tray {
  display: flex;
  align-items: center;
  gap: 2px;
  width: 173px;
  margin-top: 3px;
  border-left: 1px solid #0b3f9c;
  background: linear-gradient(#3bb6f5, #139bec 20%, #1290e8 80%, #0d6cc0);
}

.tray button {
  margin-left: -2px;
}

.avast {
  width: 15px;
  height: 15px;
  border-radius: 50%;
  font-size: 13px;
  font-weight: bold;
  line-height: 13px;
  text-align: center;
  background: #2a5d94;
}

.tray time {
  margin-left: auto;
  padding-right: 17px;
}
```
